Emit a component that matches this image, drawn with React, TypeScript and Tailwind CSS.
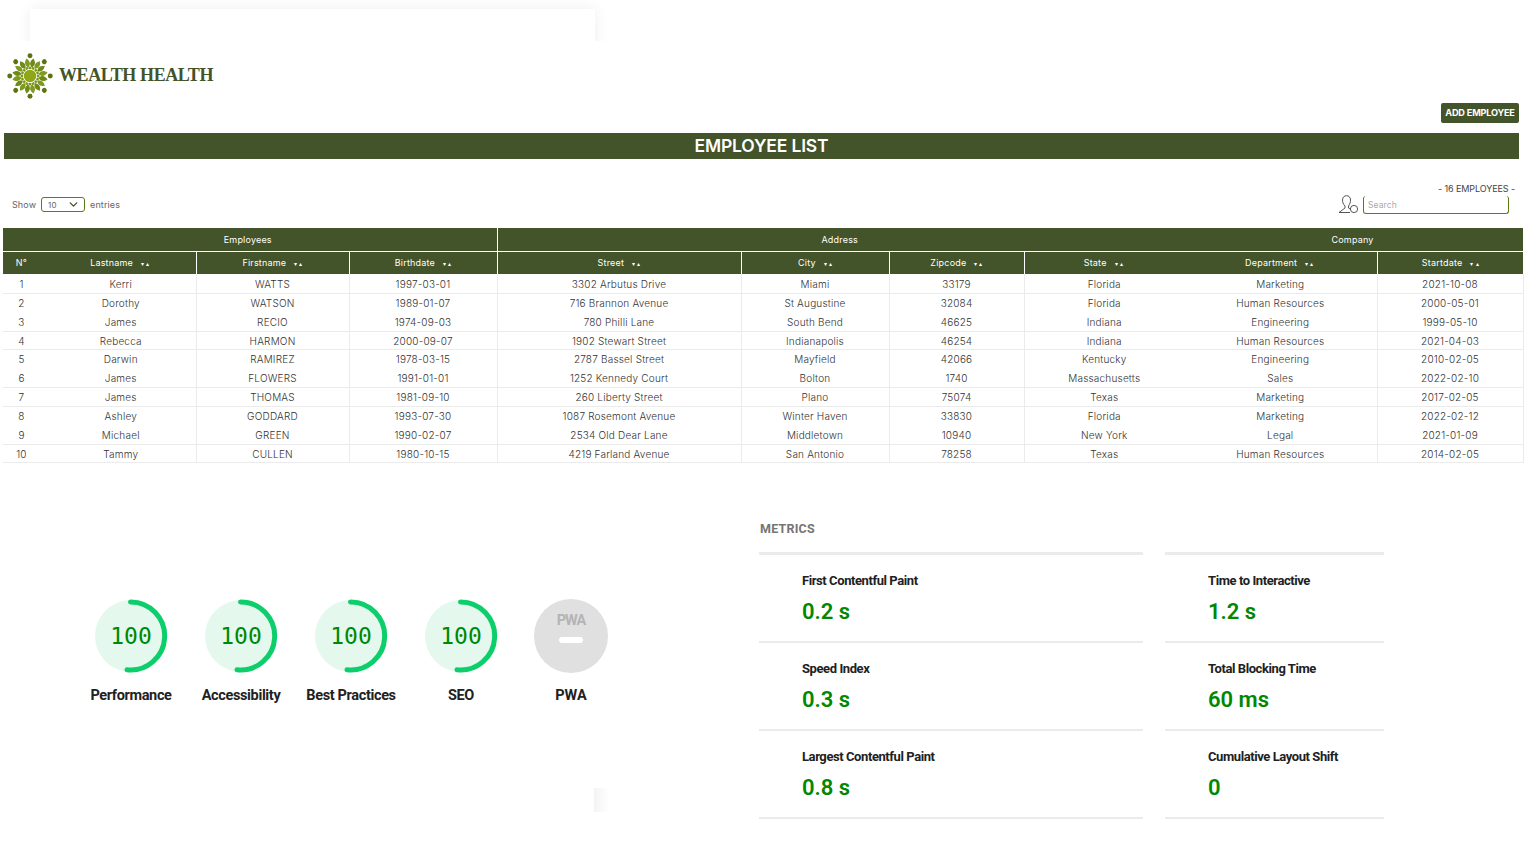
import { ChevronDown } from 'lucide-react';

const ROWS = [
    ['1', 'Kerri', 'WATTS', '1997-03-01', '3302 Arbutus Drive', 'Miami', '33179', 'Florida', 'Marketing', '2021-10-08'],
    ['2', 'Dorothy', 'WATSON', '1989-01-07', '716 Brannon Avenue', 'St Augustine', '32084', 'Florida', 'Human Resources', '2000-05-01'],
    ['3', 'James', 'RECIO', '1974-09-03', '780 Philli Lane', 'South Bend', '46625', 'Indiana', 'Engineering', '1999-05-10'],
    ['4', 'Rebecca', 'HARMON', '2000-09-07', '1902 Stewart Street', 'Indianapolis', '46254', 'Indiana', 'Human Resources', '2021-04-03'],
    ['5', 'Darwin', 'RAMIREZ', '1978-03-15', '2787 Bassel Street', 'Mayfield', '42066', 'Kentucky', 'Engineering', '2010-02-05'],
    ['6', 'James', 'FLOWERS', '1991-01-01', '1252 Kennedy Court', 'Bolton', '1740', 'Massachusetts', 'Sales', '2022-02-10'],
    ['7', 'James', 'THOMAS', '1981-09-10', '260 Liberty Street', 'Plano', '75074', 'Texas', 'Marketing', '2017-02-05'],
    ['8', 'Ashley', 'GODDARD', '1993-07-30', '1087 Rosemont Avenue', 'Winter Haven', '33830', 'Florida', 'Marketing', '2022-02-12'],
    ['9', 'Michael', 'GREEN', '1990-02-07', '2534 Old Dear Lane', 'Middletown', '10940', 'New York', 'Legal', '2021-01-09'],
    ['10', 'Tammy', 'CULLEN', '1980-10-15', '4219 Farland Avenue', 'San Antonio', '78258', 'Texas', 'Human Resources', '2014-02-05'],
];

// row borders only show on some rows in the picture
const ROW_LINES = [true, false, true, true, false, true, true, false, true, true];
const ROW_HEIGHTS = [19, 19, 19, 18, 19, 19, 19, 19, 19, 18];

const COL_WIDTHS = [41, 152, 153, 148, 244, 148, 135, 158, 195, 146];

const HEADERS = ['Lastname', 'Firstname', 'Birthdate', 'Street', 'City', 'Zipcode', 'State', 'Department', 'Startdate'];

// no divider after these columns
const NO_RIGHT_BORDER = [0, 7, 9];

const GAUGES = ['Performance', 'Accessibility', 'Best Practices', 'SEO'];

const METRICS = [
    ['First Contentful Paint', '0.2 s', 'Time to Interactive', '1.2 s'],
    ['Speed Index', '0.3 s', 'Total Blocking Time', '60 ms'],
    ['Largest Contentful Paint', '0.8 s', 'Cumulative Layout Shift', '0'],
];

function Logo() {
    const leaves = Array.from({ length: 16 }, (_, i) => i * 22.5 + 11.25);
    const ticks = Array.from({ length: 16 }, (_, i) => i * 22.5);
    const dots = Array.from({ length: 8 }, (_, i) => i * 45);
    return (
        <svg width="46" height="46" viewBox="0 0 50 50" className="shrink-0">
            <circle cx="25" cy="25" r="6.8" fill="#8fa616" />
            {ticks.map((a) => (
                <rect key={a} x="23.6" y="14.8" width="2.8" height="2.6" fill="#7c9618" transform={`rotate(${a} 25 25)`} />
            ))}
            {leaves.map((a, i) => (
                <path
                    key={a}
                    d="M25 15.5 C21.4 12.6 21.6 9.2 25 5.6 C28.4 9.2 28.6 12.6 25 15.5 Z"
                    fill={i % 2 === 0 ? '#6f8a18' : '#7f9a1e'}
                    transform={`rotate(${a} 25 25)`}
                />
            ))}
            {dots.map((a) => (
                <circle key={a} cx="25" cy="3" r="2.7" fill="#5c7410" transform={`rotate(${a} 25 25)`} />
            ))}
        </svg>
    );
}

function SearchUserIcon() {
    return (
        <svg width="21" height="19" viewBox="0 0 21 19" fill="none" stroke="#444" strokeWidth="0.9" className="shrink-0">
            <path d="M7 11 C5 9 4.5 7 4.5 5 C4.5 2 6.5 0.7 8.5 0.7 C10.5 0.7 12.5 2 12.5 5 C12.5 7 12 9 10.5 11" />
            <path d="M7 11 L7 13 L1 17.5 L12 17.5" />
            <path d="M10.5 11 L10.5 13 L12.5 14.2" />
            <circle cx="16" cy="14" r="3.6" />
        </svg>
    );
}

function Gauge({ label }: { label: string }) {
    return (
        <div className="w-[110px] flex flex-col items-center">
            <div className="relative w-[74px] h-[74px]">
                <svg width="74" height="74" viewBox="0 0 74 74">
                    <circle cx="37" cy="37" r="36" fill="#e5f8ee" />
                    <path d="M 36.5 3 A 34 34 0 1 1 33 70.8" fill="none" stroke="#0cce6b" strokeWidth="5" strokeLinecap="round" />
                </svg>
                <span className="absolute inset-0 flex items-center justify-center text-[23px] pt-[1px] text-[#008800] font-['DejaVu_Sans_Mono',monospace]">100</span>
            </div>
            <span className="mt-[13px] text-[14.5px] font-bold leading-5 text-[#212121] whitespace-nowrap tracking-[-0.35px] font-['Roboto',sans-serif]">{label}</span>
        </div>
    );
}

function PwaGauge() {
    return (
        <div className="w-[110px] flex flex-col items-center">
            <div className="w-[74px] h-[74px] rounded-full bg-[#e0e0e0] flex flex-col items-center pt-[13px]">
                <span className="text-[14.5px] leading-[18px] font-bold text-[#b4b4b4] tracking-[-1px] font-['Roboto',sans-serif]">PWA</span>
                <span className="mt-[7px] w-6 h-[6px] rounded-full bg-white" />
            </div>
            <span className="mt-[13px] text-[14.5px] font-bold leading-5 text-[#212121] font-['Roboto',sans-serif]">PWA</span>
        </div>
    );
}

function Metric({ title, value, wide }: { title: string; value: string; wide: boolean }) {
    return (
        <div className={`h-[88px] border-b-2 border-[#ebebeb] pt-[16px] pl-[43px] ${wide ? 'w-[384px]' : 'w-[219px]'}`}>
            <div className="text-[13px] leading-5 font-bold text-[#212121] tracking-[-0.42px] whitespace-nowrap">{title}</div>
            <div className="mt-[7px] text-[22px] leading-7 font-semibold text-[#008800]">{value}</div>
        </div>
    );
}

export default function App() {
    return (
        <div className="relative min-h-[860px] bg-white overflow-hidden font-['Inter',sans-serif]">
            {/* leftover card at the top */}
            <div className="h-[41px] overflow-hidden pl-[30px] pt-[9px]">
                <div className="w-[565px] h-[60px] bg-white shadow-[0_0_14px_rgba(0,0,0,0.07)]" />
            </div>

            <div className="flex items-center gap-[6px] pl-[7px] pt-[7px] h-[62px]">
                <Logo />
                <span className="text-[18px] font-bold text-[#43532a] tracking-[-0.4px] font-['Liberation_Serif',serif]">WEALTH HEALTH</span>
            </div>

            <div className="flex justify-end pr-[7px]">
                <button className="w-[78px] h-5 rounded-[2px] bg-[#43532a] text-white text-[9.2px] font-bold tracking-[-0.2px] whitespace-nowrap">ADD EMPLOYEE</button>
            </div>

            <h1 className="mt-[10px] ml-[4px] mr-[7px] h-[26px] bg-[#43532a] text-white text-[17.5px] leading-[26px] font-semibold text-center tracking-[-0.15px]">EMPLOYEE LIST</h1>

            <div className="flex items-end justify-between pl-[12px] pr-[11px] mt-[22px] h-[33px] text-[9px] tracking-[0.1px] text-[#666]">
                <div className="flex items-center gap-[5px] mb-[2px]">
                    <span>Show</span>
                    <div className="w-[44px] h-[15px] border border-[#5c7d12] rounded-[3px] flex items-center justify-between pl-[6px] pr-[4px] text-[8px]">
                        <span>10</span>
                        <ChevronDown className="w-[13px] h-[13px] text-[#43532a]" strokeWidth={2.5} />
                    </div>
                    <span>entries</span>
                </div>
                <div className="flex flex-col items-end">
                    <span className="text-[9px] leading-3 text-[#444] tracking-[-0.1px]">- 16 EMPLOYEES -</span>
                    <div className="flex items-center gap-[4px] pr-[6px]">
                        <SearchUserIcon />
                        <div className="w-[146px] h-[18px] border border-t-0 border-[#5c7d12] rounded-[3px] pl-1 leading-[18px] text-[8.5px] text-[#aaa]">Search</div>
                    </div>
                </div>
            </div>

            <table className="mt-[14px] ml-[3px] w-[1520px] table-fixed border-collapse text-[10px] font-light tracking-[0.2px] text-[#333]">
                <colgroup>
                    {COL_WIDTHS.map((w, i) => (
                        <col key={i} style={{ width: w }} />
                    ))}
                </colgroup>
                <thead className="bg-[#43532a] text-white text-[9px] tracking-[0.2px]">
                    <tr className="h-[23px]">
                        <th colSpan={4} className="font-normal border-r border-white pr-[4px] pt-[1px]">Employees</th>
                        <th colSpan={4} className="font-normal pt-[1px]">Address</th>
                        <th colSpan={2} className="font-normal pt-[1px]">Company</th>
                    </tr>
                    <tr className="h-[23px] border-t border-white">
                        <th className="font-normal pr-1">N°</th>
                        {HEADERS.map((h, i) => (
                            <th key={h} className={`font-normal ${NO_RIGHT_BORDER.includes(i + 1) ? '' : 'border-r border-white'}`}>
                                {h}
                                <span className="ml-[8px] text-[6px] align-middle">▾ ▴</span>
                            </th>
                        ))}
                    </tr>
                </thead>
                <tbody>
                    {ROWS.map((row, r) => (
                        <tr key={row[0]} style={{ height: ROW_HEIGHTS[r] }} className={ROW_LINES[r] ? 'border-b border-[#ebebeb]' : ''}>
                            {row.map((cell, c) => (
                                <td
                                    key={c}
                                    className={`p-0 pt-[2px] text-center whitespace-nowrap ${c === 0 ? 'pr-1' : ''} ${c === 1 || c === 7 || c === 8 ? 'pl-[2px]' : ''} ${NO_RIGHT_BORDER.includes(c) ? '' : 'border-r border-[#ebebeb]'} ${c === 9 ? 'border-r border-[#ebebeb]' : ''}`}
                                >
                                    {cell}
                                </td>
                            ))}
                        </tr>
                    ))}
                </tbody>
            </table>

            <div className="flex mt-[56px] font-['Roboto',sans-serif]">
                <div className="w-[759px] shrink-0 pl-[76px] pt-[80px] flex items-start">
                    {GAUGES.map((g) => (
                        <Gauge key={g} label={g} />
                    ))}
                    <PwaGauge />
                </div>
                <div>
                    <div className="pt-[2px] text-[12.5px] leading-4 font-bold text-[#757575] tracking-[0.2px] pl-px">METRICS</div>
                    <div className="mt-[15px] flex gap-[22px]">
                        <div className="border-t-[3px] border-[#ebebeb]">
                            {METRICS.map((m) => (
                                <Metric key={m[0]} title={m[0]} value={m[1]} wide />
                            ))}
                        </div>
                        <div className="border-t-[3px] border-[#ebebeb]">
                            {METRICS.map((m) => (
                                <Metric key={m[2]} title={m[2]} value={m[3]} wide={false} />
                            ))}
                        </div>
                    </div>
                </div>
            </div>

            {/* stray shadow patch */}
            <div className="absolute left-[594px] top-[788px] w-[16px] h-[24px] bg-gradient-to-r from-[#f4f4f4] to-white" />
        </div>
    );
}
